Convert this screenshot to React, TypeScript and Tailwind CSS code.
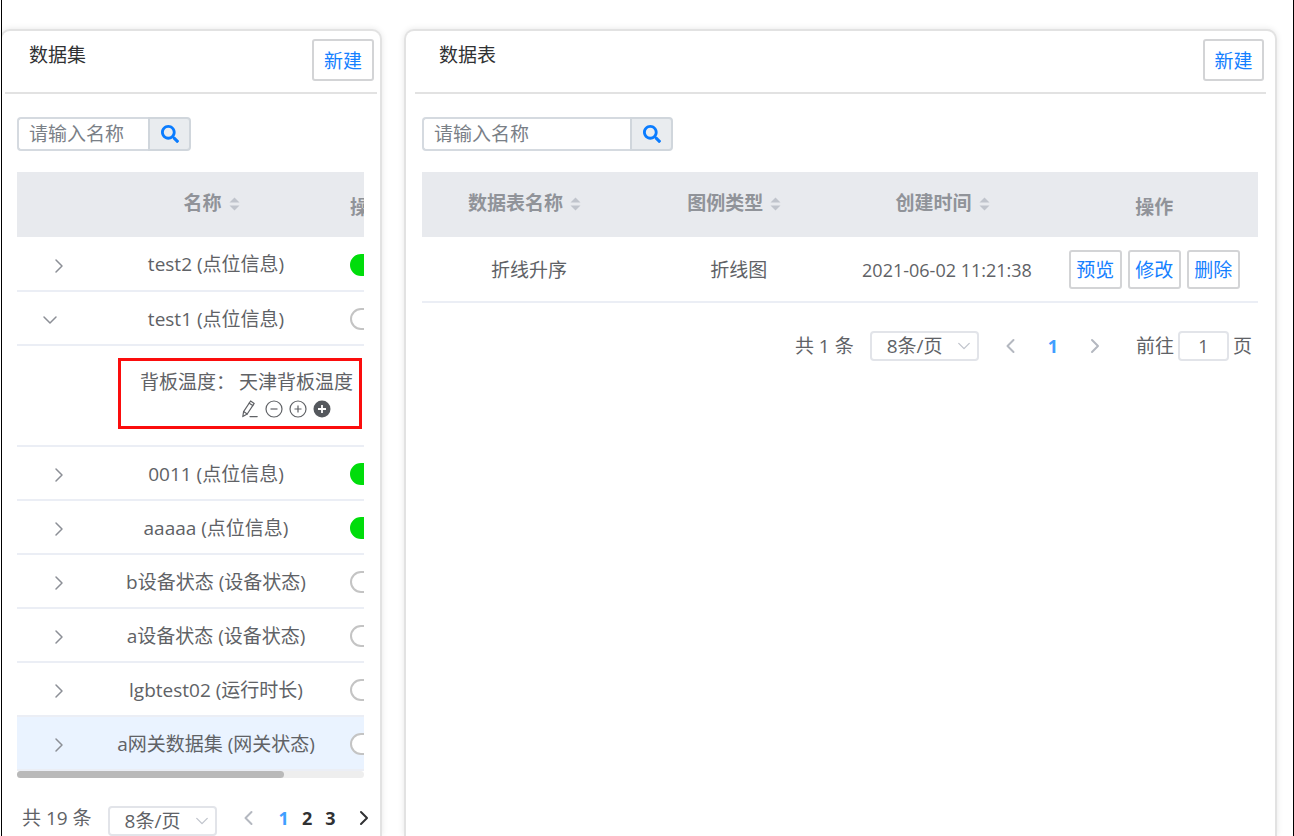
import { useState } from "react";
import type { ReactNode } from "react";
import { FaSearch } from "react-icons/fa";

const fontStack = "font-['Open_Sans','Noto_Sans_CJK_SC',sans-serif]";

function Chevron({ className, d, width = 2 }: { className: string; d: string; width?: number }) {
  return (
    <svg className={className} viewBox="0 0 16 16" fill="none" stroke="currentColor" strokeWidth={width} strokeLinecap="round" strokeLinejoin="round" aria-hidden="true">
      <path d={d} />
    </svg>
  );
}

const LEFT = "M10.5 2 L4.5 8 L10.5 14";
const RIGHT = "M5 2 L11 8 L5 14";
const DOWN = "M2 5 L8 11 L14 5";

function SortCaret() {
  return (
    <svg className="mr-[9px] ml-[7px] h-[14px] w-[11px]" viewBox="0 0 11 14" fill="#c0c4cc" aria-hidden="true">
      <path d="M5.5 0.5 L10.5 5.5 H0.5 Z" />
      <path d="M5.5 13.5 L10.5 8.5 H0.5 Z" />
    </svg>
  );
}

function SortHeader({ children }: { children: ReactNode }) {
  return (
    <th className="h-[65px] p-0 pb-0.5 align-middle font-bold">
      <button type="button" className="inline-flex items-center">
        {children}
        <SortCaret />
      </button>
    </th>
  );
}

function Panel({ title, className, headClass, titleClass, buttonClass, children }: { title: string; className: string; headClass: string; titleClass: string; buttonClass: string; children: ReactNode }) {
  return (
    <section className={`rounded-t-[10px] border-2 border-b-0 border-[#e2e2e2] bg-white shadow-[0_0_6px_rgba(0,0,0,0.1)] ${className}`}>
      <header className={`flex h-[63px] items-start justify-between border-b-2 border-[#e2e2e2] pt-2 ${headClass}`}>
        <h2 className={`pt-0.5 text-[19px] leading-7 text-[#303133] ${titleClass}`}>{title}</h2>
        <button type="button" className={`h-[42px] rounded-[3px] border-2 border-[#d3d4d6] bg-white pt-0.5 text-[19px] text-[#1580ff] ${buttonClass}`}>
          新建
        </button>
      </header>
      {children}
    </section>
  );
}

function SearchBox({ label, className }: { label: string; className: string }) {
  return (
    <form className={`flex h-[34px] ${className}`} onSubmit={(e) => e.preventDefault()}>
      <input aria-label={label} placeholder="请输入名称" className="min-w-0 flex-1 rounded-l-[4px] border-2 border-r-0 border-[#d5dae0] bg-white pl-[10px] text-[19px] outline-none placeholder:text-[#7a8087]" />
      <button type="submit" aria-label="搜索" className="flex w-[43px] items-center justify-center rounded-r-[4px] border-2 border-[#d0d6dc] bg-[#e9ecef] text-[#0a7cff]">
        <FaSearch size={18} />
      </button>
    </form>
  );
}

function PageSize() {
  return (
    <div className="relative h-[30px] w-[109px]">
      <select aria-label="每页条数" className="h-full w-full appearance-none rounded-[4px] border-2 border-[#e2e4e9] bg-white pl-[15px] text-[19px] leading-6 text-[#606266] outline-none">
        <option>8条/页</option>
        <option>16条/页</option>
      </select>
      <Chevron d={DOWN} width={1.5} className="pointer-events-none absolute top-2 right-2 size-[14px] text-[#c0c4cc]" />
    </div>
  );
}

type Dataset = { name: string; on: boolean; open?: boolean; active?: boolean };

const datasets: Dataset[] = [
  { name: "test2 (点位信息)", on: true },
  { name: "test1 (点位信息)", on: false, open: true },
  { name: "0011 (点位信息)", on: true },
  { name: "aaaaa (点位信息)", on: true },
  { name: "b设备状态 (设备状态)", on: false },
  { name: "a设备状态 (设备状态)", on: false },
  { name: "lgbtest02 (运行时长)", on: false },
  { name: "a网关数据集 (网关状态)", on: false, active: true },
];

function PointActions() {
  const base = "size-[18px]";
  return (
    <div className="mt-1 ml-[101px] flex gap-[6px] text-[#606266]">
      <button type="button" aria-label="编辑">
        <svg className={base} viewBox="0 0 18 18" fill="none" stroke="currentColor" strokeWidth="1.2" strokeLinejoin="round" strokeLinecap="round">
          <path d="M9.6 1 L13.2 3.4 L6.2 14 L1.8 16.6 L2.6 11.6 Z" />
          <path d="M8.2 3.2 L11.8 5.6 M2.6 11.6 L6.2 14 M9 16.6 H16.2" />
        </svg>
      </button>
      <button type="button" aria-label="移除">
        <svg className={base} viewBox="0 0 18 18" fill="none" stroke="currentColor" strokeWidth="1.2">
          <circle cx="9" cy="9" r="8" />
          <path d="M5.5 9 H12.5" />
        </svg>
      </button>
      <button type="button" aria-label="添加">
        <svg className={base} viewBox="0 0 18 18" fill="none" stroke="currentColor" strokeWidth="1.2">
          <circle cx="9" cy="9" r="8" />
          <path d="M5.5 9 H12.5 M9 5.5 V12.5" />
        </svg>
      </button>
      <button type="button" aria-label="新增">
        <svg className={base} viewBox="0 0 18 18">
          <circle cx="9" cy="9" r="8.5" fill="#55585d" />
          <path d="M5 9 H13 M9 5 V13" stroke="#fff" strokeWidth="1.8" />
        </svg>
      </button>
    </div>
  );
}

function DatasetRow({ item }: { item: Dataset }) {
  const [open, setOpen] = useState(!!item.open);
  const [on, setOn] = useState(item.on);
  return (
    <>
      <tr className={`border-b-2 border-[#ebeef5] ${item.active ? "bg-[#eaf3ff]" : ""}`}>
        <td className="h-[54px] p-0">
          <button type="button" aria-label="展开" aria-expanded={open} onClick={() => setOpen(!open)} className={`block pt-1 ${open ? "ml-[25px]" : "ml-[34px]"}`}>
            <Chevron d={open ? DOWN : RIGHT} width={1.5} className="size-4 text-[#8c8f96]" />
          </button>
        </td>
        <td className="p-0 pt-0.5 text-center">{item.name}</td>
        <td className="p-0 pt-0.5 pl-[18px]">
          <input
            type="checkbox"
            role="switch"
            aria-label={item.name}
            checked={on}
            onChange={() => setOn(!on)}
            className="block h-[22px] w-[44px] appearance-none rounded-full border-2 border-[#c4c4c4] bg-white checked:border-[#00dd0b] checked:bg-[#00dd0b]"
          />
        </td>
      </tr>
      {open && (
        <tr className="border-b-2 border-[#ebeef5]">
          <td colSpan={3} className="h-[101px] p-0 align-top">
            <div className="mt-3 ml-[101px] h-[71px] w-[244px] border-3 border-[#fb0d0d] pt-[7px] pl-[19px]">
              <p className="flex gap-1 leading-7 whitespace-nowrap">
                <span>背板温度：</span>
                <span>天津背板温度</span>
              </p>
              <PointActions />
            </div>
          </td>
        </tr>
      )}
    </>
  );
}

export default function App() {
  return (
    <main className={`ml-px flex h-screen gap-[22px] overflow-hidden border-x border-black bg-white pt-[29px] pr-4 text-[19px] text-[#606266] ${fontStack}`}>
      <Panel title="数据集" className="-ml-0.5 w-[382px] shrink-0" headClass="ml-[3px] mr-[3px]" titleClass="pl-6" buttonClass="mr-[3px] w-[62px]">
        <div className="pr-4 pl-[15px] pt-[23px]">
          <SearchBox label="数据集名称" className="w-[174px]" />
          <div className="mt-[21px] overflow-x-auto [scrollbar-width:none]">
            <table className="w-[446px] table-fixed border-collapse">
              <colgroup>
                <col className="w-[83px]" />
                <col className="w-[232px]" />
                <col className="w-[131px]" />
              </colgroup>
              <thead className="bg-[#e8eaee] text-[#909399]">
                <tr>
                  <th className="p-0" />
                  <SortHeader>名称</SortHeader>
                  <th className="p-0 pt-1.5 pl-[18px] text-left align-middle font-bold">操作</th>
                </tr>
              </thead>
              <tbody>
                {datasets.map((item) => (
                  <DatasetRow key={item.name} item={item} />
                ))}
              </tbody>
            </table>
          </div>
          <div className="h-[7px] rounded-full bg-[#eeeeee]">
            <div className="h-full w-[77%] rounded-full bg-[#b9b9b9]" />
          </div>
        </div>
        <nav aria-label="数据集分页" className="mt-7 flex items-start pl-5 text-[18px] leading-6">
          <span className="mr-4 text-[19px] whitespace-nowrap">共 19 条</span>
          <PageSize />
          <button type="button" aria-label="上一页" className="ml-6 pt-1 text-[#b4b8c0]">
            <Chevron d={LEFT} className="size-4" />
          </button>
          <div className="ml-[22px] flex gap-[13px] font-bold text-[#303133]">
            <button type="button" aria-current="page" className="text-[#409eff]">1</button>
            <button type="button">2</button>
            <button type="button">3</button>
          </div>
          <button type="button" aria-label="下一页" className="ml-5 pt-1 text-[#303133]">
            <Chevron d={RIGHT} className="size-4" />
          </button>
        </nav>
      </Panel>

      <Panel title="数据表" className="min-w-0 flex-1" headClass="mx-[9px]" titleClass="pl-6" buttonClass="mr-[2px] w-[61px]">
        <div className="pr-[17px] pl-4 pt-[23px]">
          <SearchBox label="数据表名称" className="w-[251px]" />
          <table className="mt-[21px] w-full table-fixed border-collapse">
            <colgroup>
              <col className="w-[25.6%]" />
              <col className="w-[24.6%]" />
              <col className="w-[25.2%]" />
              <col className="w-[24.6%]" />
            </colgroup>
            <thead className="bg-[#e8eaee] text-[#909399]">
              <tr>
                <SortHeader>数据表名称</SortHeader>
                <SortHeader>图例类型</SortHeader>
                <SortHeader>创建时间</SortHeader>
                <th className="p-0 pt-1.5 pr-0.5 align-middle font-bold">操作</th>
              </tr>
            </thead>
            <tbody>
              <tr className="border-b-2 border-[#ebeef5] text-center">
                <td className="h-[65px] p-0 pt-0.5">折线升序</td>
                <td className="p-0 pt-0.5">折线图</td>
                <td className="p-0 pt-0.5 text-[18px] whitespace-nowrap">2021-06-02 11:21:38</td>
                <td className="p-0 pr-0.5">
                  <div className="flex justify-center gap-[6px]">
                    {["预览", "修改", "删除"].map((label) => (
                      <button key={label} type="button" className="h-[39px] w-[53px] rounded-[3px] border-2 border-[#d3d4d6] bg-white pt-0.5 text-[#1580ff]">
                        {label}
                      </button>
                    ))}
                  </div>
                </td>
              </tr>
            </tbody>
          </table>
          <nav aria-label="数据表分页" className="mt-7 flex items-center justify-end pr-[6px] leading-7">
            <span className="mr-4">共 1 条</span>
            <PageSize />
            <button type="button" aria-label="上一页" className="ml-6 text-[#b4b8c0]">
              <Chevron d={LEFT} className="size-4" />
            </button>
            <button type="button" aria-current="page" className="mx-[29px] text-[18px] font-bold text-[#409eff]">1</button>
            <button type="button" aria-label="下一页" className="mr-[33px] text-[#b4b8c0]">
              <Chevron d={RIGHT} className="size-4" />
            </button>
            <label className="flex items-center gap-1">
              前往
              <input defaultValue="1" className="h-[30px] w-[51px] rounded-[4px] border-2 border-[#e2e4e9] text-center text-[18px] outline-none" />
              页
            </label>
          </nav>
        </div>
      </Panel>
    </main>
  );
}
